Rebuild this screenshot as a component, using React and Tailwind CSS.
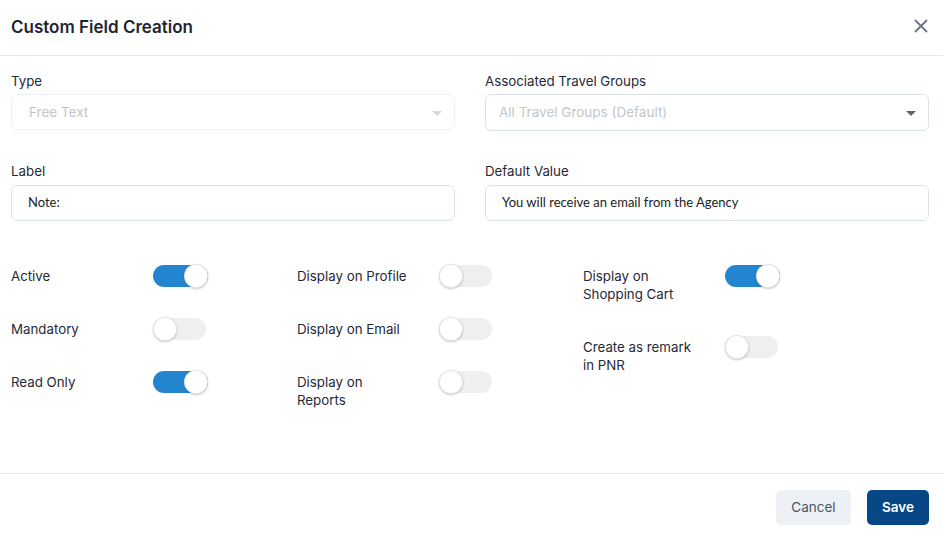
import React, { useState } from "react";

function Toggle({ on }) {
  return (
    <span
      className={
        "relative inline-block h-[22px] rounded-full mt-[1px] mb-[-2px] " +
        (on ? "bg-[#2185d0] w-[55px]" : "bg-[#efefef] w-[53px]")
      }
    >
      <span
        className={
          "absolute top-[-1px] w-[24px] h-[24px] rounded-full bg-white shadow-[0_1px_2px_rgba(34,36,38,0.25),inset_0_0_0_1px_rgba(34,36,38,0.12)] " +
          (on ? "right-0" : "left-0")
        }
      />
    </span>
  );
}

function ToggleRow({ label, on }) {
  return (
    <div className="flex items-start">
      <div className="w-[142px] pr-[28px] pt-[3px] text-[13.3px] leading-[18px] text-[#1f2937]">
        {label}
      </div>
      <Toggle on={on} />
    </div>
  );
}

function Caret() {
  return (
    <svg width="10" height="6" viewBox="0 0 10 6" className="shrink-0">
      <path d="M0 0 L10 0 L5 5 Z" fill="currentColor" />
    </svg>
  );
}

export default function App() {
  const [cols] = useState([
    [
      ["Active", true],
      ["Mandatory", false],
      ["Read Only", true],
    ],
    [
      ["Display on Profile", false],
      ["Display on Email", false],
      ["Display on Reports", false],
    ],
    [
      ["Display on Shopping Cart", true],
      ["Create as remark in PNR", false],
    ],
  ]);

  return (
    <div className="w-[943px] h-[540px] bg-white flex flex-col font-['Inter',sans-serif] text-[#1f2937]">
      {/* Header */}
      <div className="h-[56px] border-b border-[#e3e8ef] flex items-center justify-between pl-[11px] pr-[15px] shrink-0">
        <h1 className="text-[17px] font-semibold text-[#1e2533] pt-[1px]">Custom Field Creation</h1>
        <svg width="14" height="14" viewBox="0 0 14 14" className="text-[#66748a] mb-[4px]">
          <path d="M1.5 1.5 L12.5 12.5 M12.5 1.5 L1.5 12.5" stroke="currentColor" strokeWidth="1.8" strokeLinecap="round" />
        </svg>
      </div>

      {/* Body */}
      <div className="flex-1 pl-[11px] pr-[14px] pt-[16px]">
        <div className="grid grid-cols-2 gap-x-[30px] gap-y-[31px]">
          <div>
            <div className="text-[13.3px] leading-[18px] mb-[4px]">Type</div>
            <div className="h-[36px] rounded-[6px] border border-[#eef1f4] flex items-center justify-between pl-[17px] pr-[12px] text-[#c3c6ca]">
              <span className="text-[13.5px]">Free Text</span>
              <span className="text-[#d6d8db] mt-[4px]"><Caret /></span>
            </div>
          </div>
          <div>
            <div className="text-[13.3px] leading-[18px] mb-[4px]">Associated Travel Groups</div>
            <div className="h-[37px] rounded-[6px] border border-[#dde3ea] flex items-center justify-between pl-[13px] pr-[12px] text-[#c3c6ca]">
              <span className="text-[13.5px]">All Travel Groups (Default)</span>
              <span className="text-[#5f6670] mt-[3px]"><Caret /></span>
            </div>
          </div>
          <div>
            <div className="text-[13.3px] leading-[18px] mb-[5px]">Label</div>
            <div className="h-[36px] rounded-[6px] border border-[#dde3ea] flex items-center pl-[16px] text-[13px] text-[#222] font-['Lato',sans-serif]">
              Note:
            </div>
          </div>
          <div>
            <div className="text-[13.3px] leading-[18px] mb-[5px]">Default Value</div>
            <div className="h-[36px] rounded-[6px] border border-[#dde3ea] flex items-center pl-[16px] text-[13px] text-[#222] font-['Lato',sans-serif]">
              You will receive an email from the Agency
            </div>
          </div>
        </div>

        <div className="grid grid-cols-[286px_286px_1fr] mt-[43px]">
          {cols.map((col, i) => (
            <div key={i} className="flex flex-col gap-[32px]">
              {col.map(([label, on]) => (
                <ToggleRow key={label} label={label} on={on} />
              ))}
            </div>
          ))}
        </div>
      </div>

      {/* Footer */}
      <div className="h-[67px] border-t border-[#e3e8ef] flex items-start justify-end gap-[16px] pr-[14px] pt-[16px] shrink-0">
        <button className="h-[35px] w-[75px] rounded-[5px] bg-[#edf1f5] text-[13.5px] text-[#4b5563]">Cancel</button>
        <button className="h-[35px] w-[62px] rounded-[5px] bg-[#084786] text-[13.5px] font-semibold text-white">Save</button>
      </div>
    </div>
  );
}
